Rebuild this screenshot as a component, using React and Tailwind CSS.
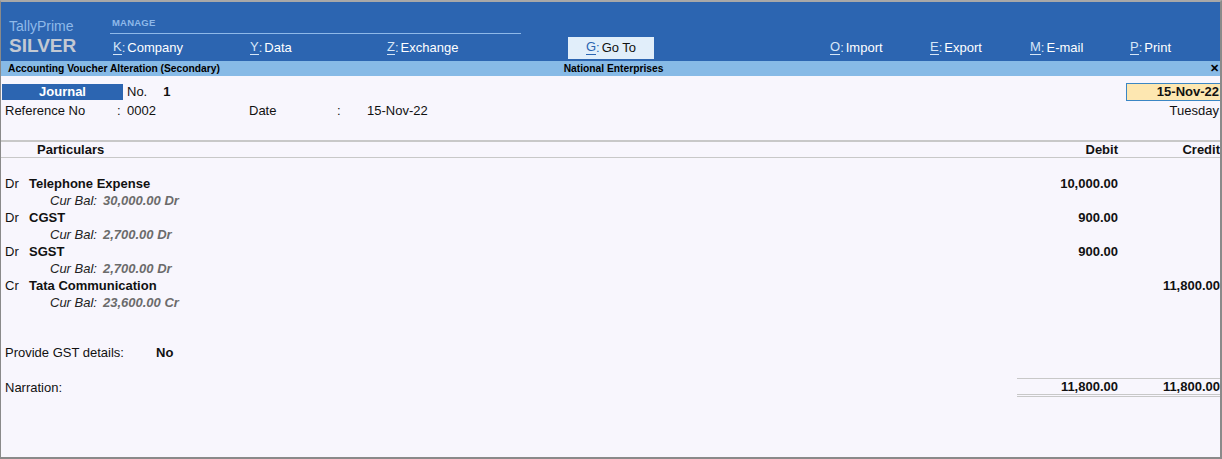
import React from 'react';

const MenuItem = ({ k, label, className = 'w-[137px]' }) => (
  <div className={`${className} flex items-center text-[13px] text-white`}>
    <span className="text-[#d6e6f7] border-b border-[#d6e6f7] leading-[14px]">{k}</span>
    <span className="text-[#d6e6f7] mr-[2px]">:</span>
    <span>{label}</span>
  </div>
);

const entries = [
  { side: 'Dr', name: 'Telephone Expense', bal: '30,000.00 Dr', debit: '10,000.00', credit: '' },
  { side: 'Dr', name: 'CGST', bal: '2,700.00 Dr', debit: '900.00', credit: '' },
  { side: 'Dr', name: 'SGST', bal: '2,700.00 Dr', debit: '900.00', credit: '' },
  { side: 'Cr', name: 'Tata Communication', bal: '23,600.00 Cr', debit: '', credit: '11,800.00' },
];

const App = () => {
  return (
    <div
      className="w-[1222px] h-[459px] overflow-hidden bg-[#f8f6fd] border-t-2 border-l border-r-2 border-b-2 border-[#8a8a8a] border-t-[#a8a8a8] flex flex-col text-[#111]"
      style={{ fontFamily: '"Liberation Sans", Arial, sans-serif' }}
    >
      {/* Top menu bar */}
      <div className="h-[59px] bg-[#2c65b1] flex shrink-0">
        <div className="w-[109px] pl-[8px] pt-[16px]">
          <div className="text-[14px] leading-[17px] text-[#8fb9e9]">TallyPrime</div>
          <div className="text-[19px] leading-[21px] font-bold text-[#c3c9d3]">SILVER</div>
        </div>
        <div className="flex-1 pt-[15px]">
          <div className="w-[411px] border-b border-[#8fb9e9] pl-[2px] pb-[4px]">
            <span className="text-[9.5px] font-bold text-[#8fb9e9] tracking-[0.2px] leading-[12px] block">MANAGE</span>
          </div>
          <div className="flex items-center h-[25px] mt-[1px] pl-[3px]">
            <MenuItem k="K" label="Company" />
            <MenuItem k="Y" label="Data" />
            <MenuItem k="Z" label="Exchange" className="w-[181px]" />
            <div className="w-[86px] h-[22px] bg-[#e1eefa] flex items-center justify-center text-[13px] text-[#111]">
              <span className="text-[#2c65b1] border-b border-[#2c65b1] leading-[14px]">G</span>
              <span className="text-[#2c65b1] mr-[2px]">:</span>
              <span>Go To</span>
            </div>
            <div className="w-[176px]" />
            <MenuItem k="O" label="Import" className="w-[100px]" />
            <MenuItem k="E" label="Export" className="w-[100px]" />
            <MenuItem k="M" label="E-mail" className="w-[100px]" />
            <MenuItem k="P" label="Print" className="w-[80px]" />
          </div>
        </div>
      </div>

      {/* Title bar */}
      <div className="h-[15px] bg-[#87bae6] flex items-center text-[10.25px] font-bold text-black shrink-0">
        <div className="flex-1 pl-[7px]">Accounting Voucher Alteration (Secondary)</div>
        <div className="w-[200px] text-center">National Enterprises</div>
        <div className="flex-1 text-right pr-[1px] text-[11px]">✕</div>
      </div>

      {/* Voucher head */}
      <div className="flex items-start pt-[7px] text-[13px]">
        <div className="w-[121px] h-[16px] bg-[#2c65b1] text-white font-bold text-center leading-[16px] ml-[1px] mt-[1px]">Journal</div>
        <div className="pl-[4px] leading-[18px]">No.</div>
        <div className="pl-[16px] font-bold leading-[18px]">1</div>
        <div className="flex-1" />
        <div className="w-[94px] h-[18px] bg-[#fde7b1] border border-[#3b86c4] border-r-0 text-right font-bold leading-[16px] pr-[1px]">15-Nov-22</div>
      </div>
      <div className="flex text-[13px] leading-[16px] mt-[2px]">
        <div className="w-[116px] pl-[4px]">Reference No</div>
        <div className="w-[10px]">:</div>
        <div className="w-[122px]">0002</div>
        <div className="w-[88px]">Date</div>
        <div className="w-[30px]">:</div>
        <div className="flex-1">15-Nov-22</div>
        <div className="pr-[1px]">Tuesday</div>
      </div>

      {/* Column headers */}
      <div className="mt-[21px] border-t-2 border-[#c8c8c8] border-b border-b-[#c8c8c8] h-[18px] flex items-center text-[13px] font-bold">
        <div className="flex-1 pl-[36px]">Particulars</div>
        <div className="w-[120px] text-right">Debit</div>
        <div className="w-[102px] text-right">Credit</div>
      </div>

      {/* Entries */}
      <div className="pt-[17px] text-[13px] leading-[17px]">
        {entries.map((e) => (
          <div key={e.name}>
            <div className="flex">
              <div className="w-[28px] pl-[4px]">{e.side}</div>
              <div className="flex-1 font-bold">{e.name}</div>
              <div className="w-[120px] text-right font-bold">{e.debit}</div>
              <div className="w-[102px] text-right font-bold">{e.credit}</div>
            </div>
            <div className="pl-[49px] italic">
              <span className="text-[#222]">Cur Bal:</span>
              <span className="pl-[6px] font-bold text-[#6b6b6b]">{e.bal}</span>
            </div>
          </div>
        ))}
      </div>

      {/* GST details */}
      <div className="mt-[33px] flex text-[13px] leading-[17px]">
        <div className="w-[155px] pl-[4px]">Provide GST details:</div>
        <div className="font-bold">No</div>
      </div>

      {/* Narration and totals */}
      <div className="mt-[17px] flex text-[13px]">
        <div className="flex-1 pl-[4px] pt-[1px] leading-[17px]">Narration:</div>
        <div className="w-[203px] border-t border-[#c8c8c8] flex font-bold leading-[16px] h-[19px] border-b-[3px] border-b-[#c8c8c8] [border-bottom-style:double]">
          <div className="w-[101px] text-right">11,800.00</div>
          <div className="w-[102px] text-right">11,800.00</div>
        </div>
      </div>
    </div>
  );
};

export default App;
